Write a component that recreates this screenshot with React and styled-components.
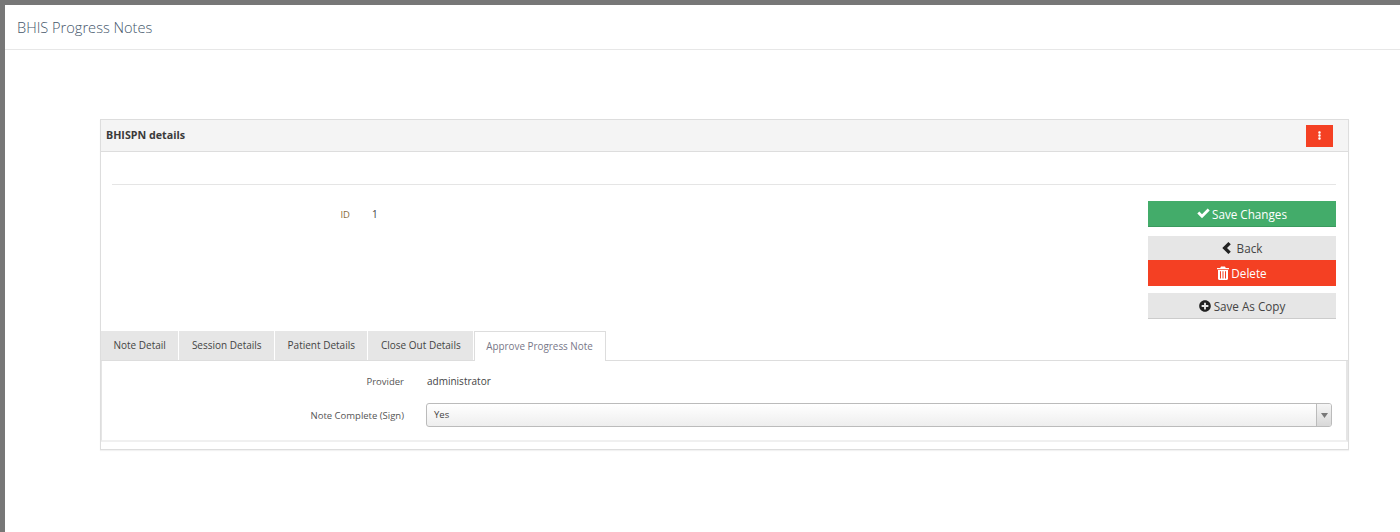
import React from "react"
import styled, { createGlobalStyle } from "styled-components"
import { FaPlusCircle, FaEllipsisV } from "react-icons/fa"

const GlobalStyle = createGlobalStyle`
  html, body {
    margin: 0;
    padding: 0;
    background: #fff;
    font-family: "Open Sans", "Liberation Sans", sans-serif;
    color: #333;
  }
`

const Page = styled.div`
  height: 532px;
  box-sizing: border-box;
  overflow: hidden;
  background: #fff;
  border-top: 5px solid #777;
  border-left: 5px solid #777;
`

const PageHeader = styled.header`
  height: 44px;
  box-sizing: content-box;
  border-bottom: 1px solid #e7e7e7;
  display: flex;
  align-items: center;
  padding-left: 12px;
  font-size: 14.6px;
  font-weight: 300;
  color: #44566a;
`

const Content = styled.main`
  padding: 69px 51px 0 95px;
`

const Panel = styled.section`
  border: 1px solid #ddd;
  box-shadow: 0 1px 1px rgba(0, 0, 0, 0.05);
  height: 331px;
  box-sizing: border-box;
`

const PanelHeading = styled.div`
  background: #f4f4f4;
  border-bottom: 1px solid #ddd;
  display: flex;
  align-items: center;
  justify-content: space-between;
  padding: 0 15px 2px 5px;
  box-sizing: content-box;
  height: 29px;
  font-size: 10.7px;
  font-weight: 700;
  color: #3a3a3a;
`

const MenuButton = styled.button`
  width: 27px;
  height: 22px;
  border: 0;
  padding: 0;
  margin-top: 2px;
  background: #f44023;
  color: #fff;
  font-size: 9px;
  display: flex;
  align-items: center;
  justify-content: center;
`

const PanelBody = styled.div`
  padding: 32px 12px 0 11px;
`

const Rule = styled.hr`
  border: 0;
  border-top: 1px solid #e5e5e5;
  margin: 0 0 16px;
`

const TopRow = styled.div`
  display: flex;
  justify-content: space-between;
  height: 130px;
`

const FieldRow = styled.div`
  display: grid;
  flex: ${(p) => (p.$grow ? 1 : "none")};
  grid-template-columns: ${(p) => p.$labelWidth}px 1fr;
  column-gap: ${(p) => p.$gap}px;
  align-items: center;
  height: ${(p) => p.$height}px;
  font-size: 9.5px;
`

const Label = styled.span`
  text-align: right;
  color: ${(p) => p.$color || "#555"};
`

const Value = styled.span`
  color: #444;
  font-size: 10px;
  margin-left: ${(p) => p.$indent || 0}px;
`

const Actions = styled.div`
  width: 188px;
  display: flex;
  flex-direction: column;
`

const ActionButton = styled.button`
  height: ${(p) => p.$height}px;
  margin-bottom: ${(p) => p.$after || 0}px;
  border: 0;
  border-bottom: 1px solid ${(p) => p.$edge};
  background: ${(p) => p.$bg};
  color: ${(p) => p.$fg};
  font-family: inherit;
  font-size: 11.7px;
  display: flex;
  align-items: center;
  justify-content: center;
  gap: ${(p) => p.$gap ?? 2}px;
  padding: 0;
  svg {
    flex: none;
    color: ${(p) => p.$icon || "inherit"};
  }
`

const Tabs = styled.div`
  display: flex;
  margin: 0 -12px 0 -11px;
  border-bottom: 1px solid #ddd;
  height: 30px;
  box-sizing: border-box;
  gap: 1px;
`

const Tab = styled.div`
  display: flex;
  align-items: center;
  padding: ${(p) => (p.$active ? "0 12px 1px 11px" : "0 12.5px 1px")};
  height: ${(p) => (p.$active ? 30 : 29)}px;
  box-sizing: border-box;
  font-size: ${(p) => (p.$active ? 9.9 : 10)}px;
  background: ${(p) => (p.$active ? "#fff" : "#e6e6e6")};
  color: ${(p) => (p.$active ? "#778" : "#444")};
  border: ${(p) => (p.$active ? "1px solid #ddd" : "0")};
  border-bottom: 0;
`

const TabPane = styled.div`
  margin: 0 -12px 0 -11px;
  height: 81px;
  box-sizing: border-box;
  border-left: 1px solid #e5e5e5;
  border-right: 2px solid #e5e5e5;
  border-bottom: 2px solid #f0f0f0;
  padding: 1px 0 0;
`

const SelectBox = styled.div`
  height: 24px;
  margin-right: 14px;
  box-sizing: border-box;
  border: 1px solid #bbb;
  border-radius: 3px;
  background: linear-gradient(#fff, #eee);
  display: flex;
  align-items: center;
  justify-content: space-between;
  padding-left: 7px;
  font-size: 9.5px;
  color: #444;
`

const SelectText = styled.span`
  margin-top: -2px;
`

const SelectArrow = styled.span`
  width: 14px;
  height: 22px;
  border-left: 1px solid #bbb;
  border-radius: 0 2px 2px 0;
  background: linear-gradient(#f5f5f5, #d8d8d8);
  display: flex;
  align-items: center;
  justify-content: center;
  svg {
    display: block;
  }
`

const CheckIcon = () => (
  <svg width="13" height="11" viewBox="0 0 13 11">
    <path d="M0.3 5.6 2.3 3.6 5 6.2 10.7 0.5 12.7 2.5 5 10.2z" fill="currentColor" />
  </svg>
)

const BackIcon = () => (
  <svg width="9" height="12" viewBox="0 0 9 12">
    <path d="M6.4 0 8.8 2.3 5 6 8.8 9.7 6.4 12 0.3 6z" fill="currentColor" />
  </svg>
)

const TrashIcon = () => (
  <svg width="12" height="14" viewBox="0 0 12 14">
    <path
      d="M4 0.5h4l0.8 1.6H12v1.2H0V2.100h3.200zM1 4h10v8.800c0 .7-.5 1.200-1.200 1.200H2.200C1.500 14 1 13.500 1 12.800zM3 5.200v7.300h1V5.200zM5.500 5.200v7.300h1V5.200zM8 5.200v7.300h1V5.200z"
      fill="currentColor"
      fillRule="evenodd"
    />
  </svg>
)

const tabs = ["Note Detail", "Session Details", "Patient Details", "Close Out Details"]

export default function App() {
  return (
    <>
      <GlobalStyle />
      <Page>
        <PageHeader>BHIS Progress Notes</PageHeader>
        <Content>
          <Panel>
            <PanelHeading>
              BHISPN details
              <MenuButton aria-label="Menu">
                <FaEllipsisV />
              </MenuButton>
            </PanelHeading>
            <PanelBody>
              <Rule />
              <TopRow>
                <FieldRow $grow $labelWidth={238} $gap={22} $height={26}>
                  <Label $color="#8a6d3b">ID</Label>
                  <Value>1</Value>
                </FieldRow>
                <Actions>
                  <ActionButton $height={26} $after={9} $bg="#43ac6a" $edge="#3a9a5e" $fg="#fff" $gap={2}>
                    <CheckIcon />
                    Save Changes
                  </ActionButton>
                  <ActionButton $height={24} $bg="#e6e6e6" $edge="#e6e6e6" $fg="#444" $icon="#222" $gap={6}>
                    <BackIcon />
                    Back
                  </ActionButton>
                  <ActionButton $height={26} $after={7} $bg="#f44023" $edge="#f44023" $fg="#fff" $gap={2}>
                    <TrashIcon />
                    Delete
                  </ActionButton>
                  <ActionButton $height={26} $bg="#e6e6e6" $edge="#ccc" $fg="#444" $icon="#222" $gap={3}>
                    <FaPlusCircle size={12} />
                    Save As Copy
                  </ActionButton>
                </Actions>
              </TopRow>
              <Tabs>
                {tabs.map((name) => (
                  <Tab key={name}>{name}</Tab>
                ))}
                <Tab $active>Approve Progress Note</Tab>
              </Tabs>
              <TabPane>
                <FieldRow $labelWidth={302} $gap={22} $height={38}>
                  <Label>Provider</Label>
                  <Value $indent={1}>administrator</Value>
                </FieldRow>
                <FieldRow $labelWidth={302} $gap={22} $height={30}>
                  <Label>Note Complete (Sign)</Label>
                  <SelectBox>
                    <SelectText>Yes</SelectText>
                    <SelectArrow>
                      <svg width="7" height="5" viewBox="0 0 7 5">
                        <path d="M0 0h7L3.5 5z" fill="#777" />
                      </svg>
                    </SelectArrow>
                  </SelectBox>
                </FieldRow>
              </TabPane>
            </PanelBody>
          </Panel>
        </Content>
      </Page>
    </>
  )
}
